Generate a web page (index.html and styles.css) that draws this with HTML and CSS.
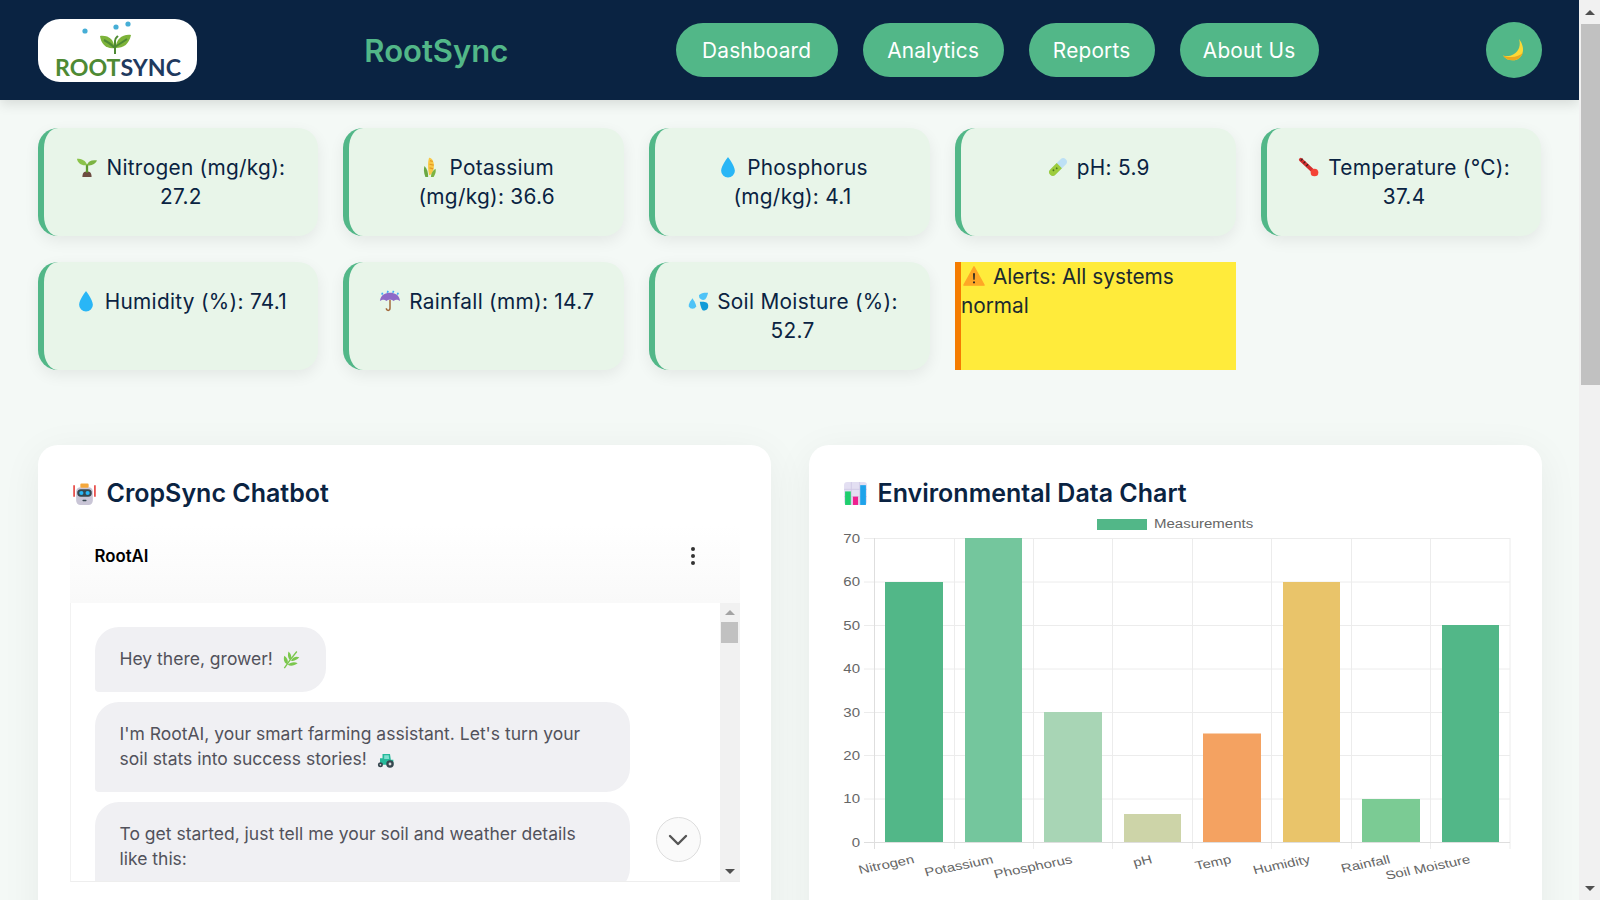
FILE: index.html
```html
<!DOCTYPE html>
<html lang="en">
<head>
<meta charset="utf-8">
<title>RootSync</title>
<link rel="stylesheet" href="styles.css">
</head>
<body>
<div class="app">
<div class="page">
  <header class="topbar">
    <div class="logo">
      <svg viewBox="37 19 160 63" width="160" height="63">
        <circle cx="84" cy="31" r="2.6" fill="#46aed6"/><circle cx="115" cy="27" r="2.6" fill="#46aed6"/><circle cx="127" cy="24" r="2.6" fill="#46aed6"/>
        <path d="M99 36 C108 35 113 40 113.500 48 C105 49 100 44 99 36Z" fill="#7db33a"/>
        <path d="M130 35 C121 34 115.500 39 114.500 48 C123 48 128 44 130 35Z" fill="#7db33a"/>
        <path d="M114 54 V41 C114 38 116 37 117 36 M114 48 C111 45 107 42 103 40 M114 47 C118 44 122 42 126 39" stroke="#4e8a34" stroke-width="2" fill="none"/>
        <text class="logo-text" x="54" y="76" textLength="126" lengthAdjust="spacingAndGlyphs"><tspan fill="#4e8a34">ROOT</tspan><tspan fill="#1f3a5f">SYNC</tspan></text>
      </svg>
    </div>
    <div class="brand">RootSync</div>
    <nav class="nav">
      <a class="nav-btn nav-dashboard">Dashboard</a>
      <a class="nav-btn nav-analytics">Analytics</a>
      <a class="nav-btn nav-reports">Reports</a>
      <a class="nav-btn nav-about">About Us</a>
    </nav>
    <button class="theme-btn" type="button" aria-label="Toggle theme">
      <svg viewBox="0 0 24 24" width="24" height="24"><path d="M17 1 C19 7 17 13 12 16 C8 18.500 4 18.500 1 17.500 C4 22 10 23.500 15 21.500 C21 19 24 10 17 1Z" fill="#fdd835"/><path d="M1 17.500 C4 22 10 23.500 15 21.500 C18 20 20 17.500 21 14.500 C17 19 9 20.500 1 17.500Z" fill="#e9a820"/></svg>
    </button>
  </header>

  <section class="stats">
    <div class="stat"><svg class="ico" viewBox="0 0 24 24"><path d="M7 23 C7 18 9 17 12 17 C15 17 17 18 17 23Z" fill="#6d4c41"/><path d="M12 18 V9" stroke="#5d9a2e" stroke-width="2.500"/><path d="M12 10 C11 5 6 3 1 3 C2 8 6 11 12 10Z" fill="#8bc34a"/><path d="M12 10 C13 6 17 4 23 5 C21 9 17 11 12 10Z" fill="#7cb342"/></svg>Nitrogen (mg/kg): 27.2</div>
    <div class="stat"><svg class="ico" viewBox="0 0 24 24"><path d="M11 2 C15 2 17 8 16 14 C15 19 13 21 11 21 C10 16 9 8 11 2Z" fill="#f9c846"/><path d="M12 5 L15 6 M11.500 9 L16 10 M11.500 13 L15.500 14" stroke="#e49b26" stroke-width="1.300"/><path d="M7 23 C5 18 5 14 6 11 C9 14 10 18 10 23Z" fill="#6aa842"/><path d="M13 23 C13 19 15 16 18 14 C19 18 17 21 16 23Z" fill="#7cb342"/></svg>Potassium (mg/kg): 36.6</div>
    <div class="stat"><svg class="ico" viewBox="0 0 24 24"><path d="M12 1 C12 1 4.500 10.500 4.500 16 A7.500 7.500 0 0 0 19.500 16 C19.500 10.500 12 1 12 1Z" fill="#29b6f6"/></svg>Phosphorus (mg/kg): 4.1</div>
    <div class="stat"><svg class="ico" viewBox="0 0 24 24"><g transform="rotate(45 12 12)"><rect x="8" y="0" width="8" height="24" rx="4" fill="#bde0f5"/><path d="M8 10 H16 V20 A4 4 0 0 1 8 20Z" fill="#9ccc3c"/><circle cx="12" cy="14" r="1" fill="#4e7a1e"/><circle cx="11" cy="18" r="1" fill="#4e7a1e"/></g></svg>pH: 5.9</div>
    <div class="stat"><svg class="ico" viewBox="0 0 24 24"><path d="M3 4 L17 17" stroke="#d32f2f" stroke-width="4" stroke-linecap="round"/><circle cx="18" cy="18" r="4.200" fill="#f44336"/><path d="M5 3 L3 5 M8 6 L6 8 M11 9 L9 11" stroke="#3b2020" stroke-width="1.300"/></svg>Temperature (°C): 37.4</div>
    <div class="stat"><svg class="ico" viewBox="0 0 24 24"><path d="M12 1 C12 1 4.500 10.500 4.500 16 A7.500 7.500 0 0 0 19.500 16 C19.500 10.500 12 1 12 1Z" fill="#29b6f6"/></svg>Humidity (%): 74.1</div>
    <div class="stat"><svg class="ico" viewBox="0 0 24 24"><path d="M1 12 C2 5 7 3 12 3 C17 3 22 5 23 12 C20 10 18 10 16 12 C14 10 10 10 8 12 C6 10 4 10 1 12Z" fill="#8e6ac8"/><path d="M12 11 V20 C12 23 8 23 8 20" stroke="#a1683a" stroke-width="1.600" fill="none"/><path d="M4 3 L3 5 M10 1 L9 3 M16 1 L15 3 M21 3 L20 5" stroke="#3fa9f5" stroke-width="1.800"/></svg>Rainfall (mm): 14.7</div>
    <div class="stat"><svg class="ico" viewBox="0 0 24 24"><path d="M6 9 C6 9 1 15 2 18 A4.500 4.500 0 0 0 10 18 C10 15 6 9 6 9Z" fill="#4fc3f7"/><path d="M23 3 C23 3 15 2 13 6 A4.500 4.500 0 0 0 20 10 C22 8 23 3 23 3Z" fill="#4fc3f7"/><path d="M14 13 C14 13 22 12 23 16 C24 21 20 23 17 22 C15 20 14 13 14 13Z" fill="#0f9bd8"/></svg>Soil Moisture (%): 52.7</div>
    <div class="stat alert"><svg class="ico" viewBox="0 0 24 24"><path d="M12 2 L23 22 H1Z" fill="#ffa726" stroke="#ffa726" stroke-width="1.500" stroke-linejoin="round"/><path d="M11 9 H13 L12.700 16 H11.300Z M11 18 H13 V20 H11Z" fill="#222"/></svg>Alerts: All systems normal</div>
  </section>

  <section class="panels">
    <article class="panel">
      <h2 class="panel-title"><svg class="title-ico" viewBox="0 0 24 24"><rect x="4" y="6" width="16" height="17" rx="4" fill="#c9c5d6"/><rect x="8" y="2.500" width="8" height="4" rx="1" fill="#f5a83c"/><rect x="5" y="8" width="14" height="7" rx="3.500" fill="#37474f"/><circle cx="9" cy="11.500" r="2" fill="#29b6f6"/><circle cx="15" cy="11.500" r="2" fill="#29b6f6"/><rect x="10" y="18" width="4" height="1.500" rx=".7" fill="#37474f"/><path d="M2 4 V15 M22 4 V15" stroke="#e53935" stroke-width="1.500"/></svg>CropSync Chatbot</h2>
      <div class="chat">
        <div class="chat-head">
          <span class="chat-name">RootAI</span>
          <svg class="dots" viewBox="0 0 6 20" width="6" height="20"><circle cx="3" cy="3" r="2" fill="#333"/><circle cx="3" cy="10" r="2" fill="#333"/><circle cx="3" cy="17" r="2" fill="#333"/></svg>
        </div>
        <div class="chat-body">
          <div class="messages">
            <div class="bubble">Hey there, grower! <svg class="emoji" viewBox="0 0 24 24"><path d="M4 23 C8 17 13 10 19 3" stroke="#7bc74d" stroke-width="1.600" fill="none"/><path d="M7 18 C3 16 3 11 4 8 C7 10 9 13 8 17Z M11 13 C8 11 8 7 9 3 C12 6 13 8 12 12Z M8 19 C12 21 16 20 20 17 C16 15 11 16 8 19Z M12 14 C16 15 19 13 22 10 C18 8 14 10 12 14Z" fill="#7bc74d"/></svg></div>
            <div class="bubble wide">I'm RootAI, your smart farming assistant. Let's turn your soil stats into success stories! <svg class="emoji" viewBox="0 0 24 24"><path d="M9 6 H18 L19 13 H22 V19 H6 V11 H9Z" fill="#26b99a"/><path d="M11 7.500 H16.500 L17 12 H11Z" fill="#7fe0cf"/><circle cx="6.500" cy="19" r="3" fill="#37474f"/><circle cx="6.500" cy="19" r="1" fill="#ddd"/><circle cx="18" cy="18" r="4.500" fill="#37474f"/><circle cx="18" cy="18" r="1.700" fill="#ddd"/></svg></div>
            <div class="bubble wide">To get started, just tell me your soil and weather details like this:</div>
          </div>
          <button class="jump" type="button" aria-label="Scroll down"><svg viewBox="0 0 20 12" width="20" height="12"><path d="M2 2 L10 10 L18 2" stroke="#555" stroke-width="2.400" fill="none" stroke-linecap="round" stroke-linejoin="round"/></svg></button>
          <div class="chat-scroll">
            <span class="arrow up small"></span>
            <span class="chat-thumb"></span>
            <span class="chat-track"></span>
            <span class="arrow down small"></span>
          </div>
        </div>
      </div>
    </article>

    <article class="panel">
      <h2 class="panel-title"><svg class="title-ico" viewBox="0 0 24 24"><rect x="1" y="1" width="22" height="22" rx="3" fill="#e3dff2"/><path d="M1 8 H23 M1 15 H23 M8 1 V23 M16 1 V23" stroke="#cfc9e6" stroke-width=".8"/><rect x="2" y="10" width="5.500" height="13" fill="#1fce6d"/><rect x="9.500" y="15" width="5" height="8" fill="#ef1f8f"/><rect x="16.500" y="4" width="5.500" height="19" fill="#1fa3ea"/></svg>Environmental Data Chart</h2>
      <svg class="chart" viewBox="841 510 664 380" width="664" height="380">
        <g class="grid">
          <path d="M864 539.500H1510M864 583H1510M864 626.500H1510M864 670H1510M864 713.500H1510M864 756.500H1510M864 800H1510"/>
          <path d="M954.500 539V850M1033.500 539V850M1112.500 539V850M1192.500 539V850M1271.500 539V850M1351.500 539V850M1430.500 539V850M1510 539V850"/>
        </g>
        <g class="axis"><path d="M874.500 539V850M864 843.500H1510"/></g>
        <rect x="885" y="583" width="58" height="260" fill="#52b788"/>
        <rect x="965" y="539" width="57" height="304" fill="#74c69d"/>
        <rect x="1044" y="713" width="58" height="130" fill="#a8d5b5"/>
        <rect x="1124" y="815" width="57" height="28" fill="#cdd4a8"/>
        <rect x="1203" y="734.500" width="58" height="108.500" fill="#f4a261"/>
        <rect x="1283" y="583" width="57" height="260" fill="#e9c46a"/>
        <rect x="1362" y="800" width="58" height="43" fill="#7bcb94"/>
        <rect x="1442" y="626" width="57" height="217" fill="#52b788"/>
        <rect x="1097" y="520" width="50" height="11" fill="#52b788"/>
        <g class="chart-text">
          <text transform="translate(1154 529) scale(1.25 1)">Measurements</text>
          <text class="end" transform="translate(860 543.500) scale(1.25 1)">70</text>
          <text class="end" transform="translate(860 587) scale(1.25 1)">60</text>
          <text class="end" transform="translate(860 630.500) scale(1.25 1)">50</text>
          <text class="end" transform="translate(860 674) scale(1.25 1)">40</text>
          <text class="end" transform="translate(860 717.500) scale(1.25 1)">30</text>
          <text class="end" transform="translate(860 760.500) scale(1.25 1)">20</text>
          <text class="end" transform="translate(860 804) scale(1.25 1)">10</text>
          <text class="end" transform="translate(860 847.500) scale(1.25 1)">0</text>
          <text class="end" transform="translate(915 864) scale(1.25 1) rotate(-14)">Nitrogen</text>
          <text class="end" transform="translate(994 864) scale(1.25 1) rotate(-14)">Potassium</text>
          <text class="end" transform="translate(1073 864) scale(1.25 1) rotate(-14)">Phosphorus</text>
          <text class="end" transform="translate(1153 864) scale(1.25 1) rotate(-14)">pH</text>
          <text class="end" transform="translate(1232 864) scale(1.25 1) rotate(-14)">Temp</text>
          <text class="end" transform="translate(1311 864) scale(1.25 1) rotate(-14)">Humidity</text>
          <text class="end" transform="translate(1391 864) scale(1.25 1) rotate(-14)">Rainfall</text>
          <text class="end" transform="translate(1471 864) scale(1.25 1) rotate(-14)">Soil Moisture</text>
        </g>
      </svg>
    </article>
  </section>
</div>
<aside class="page-scroll">
  <span class="arrow up"></span>
  <span class="page-thumb"></span>
  <span class="page-track"></span>
  <span class="arrow down"></span>
</aside>
</div>
</body>
</html>
```
FILE: styles.css
```css
* { box-sizing: border-box; }
html, body { margin: 0; height: 100%; }
body { font-family: "Inter", "Noto Sans", sans-serif; color: #0a2342; background: #f4f9f6; overflow: hidden; }
.app { display: flex; height: 100vh; }
.page { flex: 1; min-width: 0; height: 100vh; overflow: hidden; background: #f4f9f6; }

.topbar { height: 100px; width: 1579px; background: #0a2342; padding: 0 37px 0 37.5px; display: flex; align-items: center; justify-content: space-between; box-shadow: 0 4px 12px rgba(0,0,0,.12); position: relative; }
.logo { width: 159.5px; height: 63px; background: #fff; border-radius: 22px; overflow: hidden; }
.logo svg { display: block; }
.logo-text { font-family: "Lato", sans-serif; font-weight: 700; font-size: 23px; }
.brand { color: #52b788; font-size: 31px; font-weight: 600; }
.nav { display: flex; gap: 25px; }
.nav-btn { height: 54px; border-radius: 27px; background: #52b788; color: #fff; font-size: 20.8px; display: flex; align-items: center; justify-content: center; letter-spacing: .2px; }
.nav-dashboard { width: 162px; }
.nav-analytics { width: 141px; }
.nav-reports { width: 126px; }
.nav-about { width: 139px; }
.theme-btn { width: 56px; height: 56px; border: 0; border-radius: 50%; background: #52b788; padding: 0; display: flex; align-items: center; justify-content: center; }

.stats { display: grid; grid-template-columns: repeat(5, 1fr); gap: 25.5px 25px; padding: 27.5px 37.5px 0; }
.stat { background: #e8f5e9; border-left: 6px solid #52b788; border-radius: 20px; padding: 25.5px 25px; height: 108.5px; font-size: 20.8px; line-height: 29.3px; text-align: center; letter-spacing: .3px; box-shadow: 0 5px 15px rgba(0,0,0,.07); }
.ico { width: 22px; height: 22px; vertical-align: -3px; margin-right: 8px; }
.stat.alert { background: #ffeb3b; border-left-color: #f57c00; border-radius: 0; padding: 0; text-align: left; box-shadow: none; color: #1b2a2f; letter-spacing: 0; }
.stat.alert .ico { margin-left: 2px; }

.panels { display: grid; grid-template-columns: 1fr 1fr; gap: 38px; padding: 75px 37.5px 0; }
.panel { background: #fff; border-radius: 20px; padding: 28px 31px 0 32px; height: 520px; box-shadow: 0 8px 40px rgba(0,0,0,.06); }
.panel-title { margin: 0; font-size: 25px; line-height: 40px; font-weight: 600; color: #0a2342; display: flex; align-items: center; padding-left: 2px; }
.title-ico { width: 25px; height: 25px; margin-right: 10px; }

.chat { margin-top: 12px; }
.chat-head { height: 78px; padding: 20px 25px 0; display: flex; justify-content: space-between; align-items: flex-start; background: linear-gradient(#fff, #f9f9f9); }
.chat-name { font-size: 16.8px; line-height: 22px; font-weight: 600; color: #000; }
.dots { margin: 1px 19px 0 0; }
.chat-body { display: flex; height: 279px; position: relative; border-bottom: 1px solid #eee; border-left: 1px solid #f2f2f2; }
.messages { flex: 1; min-width: 0; overflow: hidden; padding: 24px 24px; display: flex; flex-direction: column; align-items: flex-start; gap: 10px; }
.bubble { background: #f0f0f3; color: #52525b; font-size: 17.5px; line-height: 25px; padding: 19px 25px 21px; border-radius: 24px 24px 24px 4px; flex: none; }
.bubble.wide { width: 535px; }
.emoji { width: 20px; height: 20px; vertical-align: -4px; margin-left: 3px; }
.jump { position: absolute; left: 585px; top: 214px; width: 45px; height: 45px; border-radius: 50%; background: #fafafa; border: 1px solid #ddd; padding: 1px 0 0; display: flex; align-items: center; justify-content: center; }
.chat-scroll { width: 20px; background: #f1f1f1; display: flex; flex-direction: column; align-items: center; }
.chat-thumb { width: 17px; height: 21px; background: #c1c1c1; flex: none; }
.chat-track { flex: 1; }
.arrow { flex: none; width: 100%; height: 19px; display: flex; align-items: center; justify-content: center; }
.arrow::before { content: ""; border-left: 5px solid transparent; border-right: 5px solid transparent; }
.arrow.up::before { border-bottom: 5px solid #a3a3a3; }
.arrow.down::before { border-top: 5px solid #505050; }
.arrow.up:not(.small)::before { border-bottom-color: #505050; }

.chart { display: block; overflow: visible; margin-top: -4px; }
.grid path { stroke: #ececec; stroke-width: 1; fill: none; }
.axis path { stroke: #dedede; stroke-width: 1; fill: none; }
.chart-text text { font-family: "Liberation Sans", Arial, sans-serif; font-size: 12px; fill: #666; }
.chart-text .end { text-anchor: end; }

.page-scroll { width: 21px; height: 100vh; background: #f1f1f1; display: flex; flex-direction: column; align-items: flex-end; }
.page-scroll .arrow { height: 24px; }
.page-thumb { width: 19px; height: 361px; background: #c1c1c1; flex: none; }
.page-track { flex: 1; }
```
